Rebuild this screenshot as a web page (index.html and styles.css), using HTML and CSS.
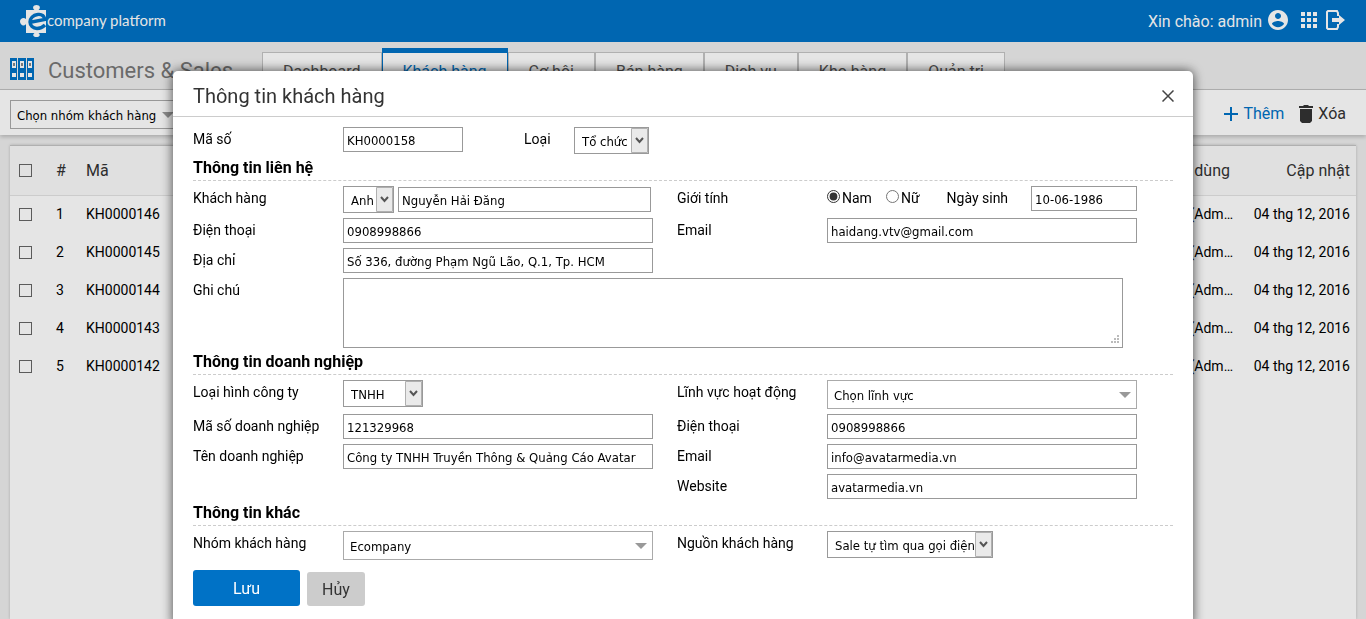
FILE: index.html
```html
<!DOCTYPE html>
<html lang="vi">
<head>
    <meta charset="UTF-8">
    <meta name="viewport" content="width=device-width, initial-scale=1.0">
    <title>Customers &amp; Sales</title>
    <link rel="stylesheet" href="styles.css">
</head>
<body>
    <header class="topbar">
        <a class="logo" href="#">
            <svg class="logo-mark" width="27" height="32" viewBox="0 0 27 32">
                <path fill="#fff" d="M6 5h8.500c-2.500-2-1.500-5 2-5s4.500 3 2 5H26v23h-7.500c2.500 2 1 4-2 4s-4.500-2-2-4H6v-9c-2 3-6 1-6-2.500S4 12 6 14z"/>
                <path fill="none" stroke="#0072c6" stroke-width="3.400" d="M9 17.500l16-3c-1-4-4-5.500-7.500-5-4.500.5-7.500 4-7.500 7.500s3 6.500 7 6.500c3 0 5.500-1 8-3.500"/>
            </svg>
            <span class="logo-text">company platform</span>
        </a>
        <div class="user-menu">
            <span class="greeting">Xin chào: admin</span>
            <button class="icon-button" aria-label="Tài khoản">
                <svg width="20" height="20" viewBox="2 2 20 20"><path fill="#fff" d="M12 2C6.480 2 2 6.480 2 12s4.480 10 10 10 10-4.480 10-10S17.520 2 12 2zm0 3c1.660 0 3 1.340 3 3s-1.340 3-3 3-3-1.340-3-3 1.340-3 3-3zm0 14.200c-2.500 0-4.710-1.280-6-3.220.03-1.990 4-3.080 6-3.080 1.990 0 5.970 1.090 6 3.080-1.290 1.940-3.500 3.220-6 3.220z"/></svg>
            </button>
            <button class="icon-button apps" aria-label="Ứng dụng">
                <svg width="16" height="16" viewBox="4 4 16 16"><path fill="#fff" d="M4 8h4V4H4zm6 12h4v-4h-4zm-6 0h4v-4H4zm0-6h4v-4H4zm6 0h4v-4h-4zm6-10v4h4V4zm-6 4h4V4h-4zm6 6h4v-4h-4zm0 6h4v-4h-4z"/></svg>
            </button>
            <button class="icon-button" aria-label="Thoát">
                <svg width="20" height="20" viewBox="0 0 20 20"><path fill="none" stroke="#fff" stroke-width="2" d="M12 6V3l-1-2H2L1 2v16l1 1h9l1-2v-3"/><path fill="#fff" d="M6 8h7V5l6 5-6 5v-3H6z"/></svg>
            </button>
        </div>
    </header>

    <div class="titlebar">
        <svg class="module-icon" width="24" height="22" viewBox="0 0 24 22">
            <path fill="#0072c6" d="M0 0h7v22H0zM8 0h8v22H8zM17 0h7v22h-7z"/>
            <path fill="#fff" d="M2 3h4v7H2zM10 3h4v7h-4zM18 3h4v7h-4zM2 15h4v4H2zM10 15h4v4h-4zM18 15h4v4h-4z"/>
            <path fill="#888" d="M3 5h2v3H3zM11 5h2v3h-2zM19 5h2v3h-2z"/>
        </svg>
        <h1 class="module-title">Customers &amp; Sales</h1>
        <nav class="tabs">
            <a class="tab" href="#">Dashboard</a>
            <a class="tab active" href="#">Khách hàng</a>
            <a class="tab" href="#">Cơ hội</a>
            <a class="tab" href="#">Bán hàng</a>
            <a class="tab" href="#">Dịch vụ</a>
            <a class="tab" href="#">Kho hàng</a>
            <a class="tab" href="#">Quản trị</a>
        </nav>
    </div>

    <div class="toolbar">
        <select class="combo group-filter" aria-label="Nhóm khách hàng">
            <option>Chọn nhóm khách hàng</option>
        </select>
        <div class="actions">
            <button class="action add">
                <svg width="14" height="14" viewBox="0 0 14 14"><path fill="#0072c6" d="M6 0h2v6h6v2H8v6H6V8H0V6h6z"/></svg>
                Thêm
            </button>
            <button class="action">
                <svg width="14" height="18" viewBox="0 0 14 18"><path fill="#333" d="M1 4h12v12l-2 2H3l-2-2zM0 1h4l1-1h4l1 1h4v2H0z"/></svg>
                Xóa
            </button>
        </div>
    </div>

    <div class="list">
        <table class="customers">
            <thead>
                <tr>
                    <th class="col-check"><input type="checkbox" aria-label="Chọn tất cả"></th>
                    <th class="col-index">#</th>
                    <th>Mã</th>
                    <th class="col-user">Người dùng</th>
                    <th class="col-date">Cập nhật</th>
                </tr>
            </thead>
            <tbody>
                <tr>
                    <td><input type="checkbox" aria-label="KH0000146"></td>
                    <td>1</td>
                    <td>KH0000146</td>
                    <td class="col-user">(Adm…</td>
                    <td class="col-date">04 thg 12, 2016</td>
                </tr>
                <tr>
                    <td><input type="checkbox" aria-label="KH0000145"></td>
                    <td>2</td>
                    <td>KH0000145</td>
                    <td class="col-user">(Adm…</td>
                    <td class="col-date">04 thg 12, 2016</td>
                </tr>
                <tr>
                    <td><input type="checkbox" aria-label="KH0000144"></td>
                    <td>3</td>
                    <td>KH0000144</td>
                    <td class="col-user">(Adm…</td>
                    <td class="col-date">04 thg 12, 2016</td>
                </tr>
                <tr>
                    <td><input type="checkbox" aria-label="KH0000143"></td>
                    <td>4</td>
                    <td>KH0000143</td>
                    <td class="col-user">(Adm…</td>
                    <td class="col-date">04 thg 12, 2016</td>
                </tr>
                <tr>
                    <td><input type="checkbox" aria-label="KH0000142"></td>
                    <td>5</td>
                    <td>KH0000142</td>
                    <td class="col-user">(Adm…</td>
                    <td class="col-date">04 thg 12, 2016</td>
                </tr>
            </tbody>
        </table>
    </div>

    <!-- Customer dialog -->
    <div class="overlay">
        <div class="modal" role="dialog" aria-labelledby="modal-title">
            <div class="modal-header">
                <h2 class="modal-title" id="modal-title">Thông tin khách hàng</h2>
                <button class="close-button" aria-label="Đóng">
                    <svg width="12" height="12" viewBox="0 0 12 12"><path fill="none" stroke="#444" stroke-width="1.500" d="M.5.5l11 11M11.500.5l-11 11"/></svg>
                </button>
            </div>

            <form class="modal-body">
                <div class="fields">
                    <div class="field">
                        <label class="label" for="code">Mã số</label>
                        <div class="control">
                            <input class="input code" id="code" type="text" value="KH0000158">
                            <label class="label-inline" for="kind">Loại</label>
                            <select class="select kind" id="kind"><option>Tổ chức</option></select>
                        </div>
                    </div>
                </div>

                <h3 class="section-title">Thông tin liên hệ</h3>
                <div class="fields">
                    <div class="field">
                        <label class="label" for="name">Khách hàng</label>
                        <div class="control name-line">
                            <select class="select salutation" aria-label="Danh xưng"><option>Anh</option></select>
                            <input class="input" id="name" type="text" value="Nguyễn Hải Đăng">
                        </div>
                    </div>
                    <div class="field">
                        <span class="label">Giới tính</span>
                        <div class="control gender-line">
                            <label class="radio"><input type="radio" name="gender" checked>Nam</label>
                            <label class="radio"><input type="radio" name="gender">Nữ</label>
                            <label class="label-birthday" for="birthday">Ngày sinh</label>
                            <input class="input" id="birthday" type="text" value="10-06-1986">
                        </div>
                    </div>
                    <div class="field">
                        <label class="label" for="phone">Điện thoại</label>
                        <input class="input" id="phone" type="text" value="0908998866">
                    </div>
                    <div class="field">
                        <label class="label" for="email">Email</label>
                        <input class="input" id="email" type="text" value="haidang.vtv@gmail.com">
                    </div>
                    <div class="field field-left">
                        <label class="label" for="address">Địa chỉ</label>
                        <input class="input" id="address" type="text" value="Số 336, đường Phạm Ngũ Lão, Q.1, Tp. HCM">
                    </div>
                    <div class="field field-wide">
                        <label class="label" for="note">Ghi chú</label>
                        <textarea class="textarea" id="note"></textarea>
                    </div>
                </div>

                <h3 class="section-title">Thông tin doanh nghiệp</h3>
                <div class="fields">
                    <div class="field">
                        <label class="label" for="company-type">Loại hình công ty</label>
                        <select class="select company-type" id="company-type"><option>TNHH</option></select>
                    </div>
                    <div class="field">
                        <label class="label" for="industry">Lĩnh vực hoạt động</label>
                        <select class="combo" id="industry"><option>Chọn lĩnh vực</option></select>
                    </div>
                    <div class="field">
                        <label class="label" for="tax-code">Mã số doanh nghiệp</label>
                        <input class="input" id="tax-code" type="text" value="121329968">
                    </div>
                    <div class="field">
                        <label class="label" for="company-phone">Điện thoại</label>
                        <input class="input" id="company-phone" type="text" value="0908998866">
                    </div>
                    <div class="field">
                        <label class="label" for="company-name">Tên doanh nghiệp</label>
                        <input class="input" id="company-name" type="text" value="Công ty TNHH Truyền Thông &amp; Quảng Cáo Avatar">
                    </div>
                    <div class="field">
                        <label class="label" for="company-email">Email</label>
                        <input class="input" id="company-email" type="text" value="info@avatarmedia.vn">
                    </div>
                    <div class="field field-right">
                        <label class="label" for="website">Website</label>
                        <input class="input" id="website" type="text" value="avatarmedia.vn">
                    </div>
                </div>

                <h3 class="section-title">Thông tin khác</h3>
                <div class="fields">
                    <div class="field">
                        <label class="label" for="group">Nhóm khách hàng</label>
                        <select class="combo" id="group"><option>Ecompany</option></select>
                    </div>
                    <div class="field">
                        <label class="label" for="source">Nguồn khách hàng</label>
                        <select class="select source" id="source"><option>Sale tự tìm qua gọi điện</option></select>
                    </div>
                </div>

                <div class="buttons">
                    <button class="button save" type="button">Lưu</button>
                    <button class="button cancel" type="button">Hủy</button>
                </div>
            </form>
        </div>
    </div>
</body>
</html>
```

FILE: styles.css
```css
* {
    box-sizing: border-box;
}

body {
    margin: 0;
    height: 100vh;
    display: flex;
    flex-direction: column;
    overflow: hidden;
    font-family: Roboto, sans-serif;
    font-size: 14px;
    color: #000;
    background: #eee;
}

button {
    font-family: inherit;
    border: none;
    background: none;
    padding: 0;
    cursor: pointer;
}

/* Top bar */
.topbar {
    display: flex;
    justify-content: space-between;
    align-items: center;
    height: 42px;
    padding: 0 20px;
    background: #0072c6;
    color: #fff;
}

.logo {
    display: flex;
    align-items: center;
    color: #fff;
    text-decoration: none;
}

.logo-text {
    font-family: Lato, sans-serif;
    font-size: 15px;
    line-height: 20px;
    padding-bottom: 3px;
}

.user-menu {
    display: flex;
    align-items: center;
    gap: 6px;
    padding-bottom: 2px;
}

.greeting {
    padding-top: 2px;
    font-size: 16px;
}

.icon-button {
    display: flex;
}

.apps {
    margin: 0 3px 0 7px;
}

/* Module title and tabs */
.titlebar {
    display: flex;
    height: 48px;
    padding: 0 10px;
    border-bottom: 1px solid #c4c4c4;
}

.module-icon {
    margin-top: 16px;
}

.module-title {
    margin: 0 29px 0 14px;
    font-size: 22px;
    font-weight: normal;
    line-height: 58px;
    color: #777;
    white-space: nowrap;
}

.tabs {
    display: flex;
    align-items: flex-end;
}

.tab {
    height: 37px;
    padding: 0 20px;
    border: 1px solid #c4c4c4;
    border-bottom: none;
    background: #fff;
    color: #555;
    font-size: 16px;
    line-height: 38px;
    text-decoration: none;
    white-space: nowrap;
}

.tab.active {
    height: 41px;
    border-color: #0072c6;
    border-top-width: 5px;
    color: #0072c6;
}

/* Toolbar */
.toolbar {
    display: flex;
    justify-content: space-between;
    align-items: center;
    padding: 10px 20px 6px 10px;
    background: #fff;
    box-shadow: 0 2px 4px rgba(0,0,0,0.2);
}

.combo.group-filter {
    width: 170px;
    flex: none;
}

.actions {
    display: flex;
    gap: 15px;
    padding-bottom: 2px;
}

.action {
    display: flex;
    align-items: center;
    gap: 5px;
    font-size: 16px;
    color: #333;
}

.action.add {
    color: #0072c6;
}

/* Customer list */
.list {
    flex: 1;
    margin: 10px 10px 0;
    border-top: 1px solid #c4c4c4;
    background: #fff;
    box-shadow: 0 0 3px rgba(0,0,0,0.2);
}

.customers {
    width: 100%;
    border-collapse: collapse;
    table-layout: fixed;
}

.customers th {
    height: 49px;
    padding: 0;
    border-bottom: 1px solid #e4e4e4;
    background: #fafafa;
    font-size: 16px;
    font-weight: normal;
    text-align: left;
    color: #333;
}

.customers td {
    height: 38px;
    padding: 0;
}

.customers .col-check {
    width: 46px;
}

.customers .col-index {
    width: 30px;
}

.customers .col-user {
    width: 90px;
    text-align: right;
}

.customers th.col-user {
    padding-right: 3px;
}

.customers .col-date {
    width: 123px;
    padding-right: 6px;
    text-align: right;
}

.customers input {
    display: block;
    appearance: none;
    width: 13px;
    height: 13px;
    margin: 0 0 0 9px;
    border: 1px solid #666;
}

/* Dialog */
.overlay {
    position: fixed;
    inset: 0;
    padding-top: 71px;
    background: rgba(0,0,0,0.1);
    overflow: hidden;
}

.modal {
    max-width: 1020px;
    min-height: 100%;
    margin: 0 auto;
    border-radius: 5px 5px 0 0;
    background: #fff;
    box-shadow: 0 0 12px rgba(0,0,0,0.7);
}

.modal-header {
    display: flex;
    justify-content: space-between;
    align-items: center;
    height: 46px;
    padding: 4px 19px 0 20px;
    border-bottom: 1px solid #ccc;
}

.modal-title {
    margin: 0;
    font-size: 20px;
    font-weight: normal;
    color: #333;
}

.close-button {
    display: flex;
}

.modal-body {
    padding: 5px 20px 20px;
}

.section-title {
    height: 27px;
    margin: 0;
    border-bottom: 1px dashed #ccc;
    font-size: 16px;
    font-weight: bold;
    line-height: 28px;
}

.fields {
    display: grid;
    grid-template-columns: repeat(2, minmax(0, 1fr));
    gap: 5px 24px;
    padding: 5px 36px 0 0;
}

.field {
    display: flex;
    align-items: flex-start;
}

.field-left {
    grid-column: 1;
}

.field-right {
    grid-column: 2;
}

.field-wide {
    grid-column: 1 / 3;
    padding-right: 14px;
}

.label {
    flex: none;
    width: 150px;
    line-height: 25px;
}

.control {
    flex: 1;
    display: flex;
    min-width: 0;
}

.input,
.select,
.combo,
.textarea {
    flex: 1;
    min-width: 0;
    margin: 0;
    border: 1px solid #999;
    border-radius: 0;
    background: #fff;
    color: #000;
    font-family: "DejaVu Sans Condensed", "Noto Sans", sans-serif;
    font-size: 13px;
}

.input {
    height: 25px;
    padding: 2px 3px 0;
}

.input.code {
    flex: none;
    width: 120px;
}

.textarea {
    display: block;
    height: 70px;
}

.textarea::-webkit-resizer {
    background: url("data:image/svg+xml,%3Csvg xmlns='http://www.w3.org/2000/svg' width='8' height='9'%3E%3Cpath fill='%23bbb' d='M0 6h2v2H0zM3 6h2v2H3zM3 3h2v2H3zM6 6h2v2H6zM6 3h2v2H6zM6 0h2v2H6z'/%3E%3C/svg%3E") no-repeat center;
}

.select {
    appearance: none;
    flex: none;
    height: 27px;
    padding: 2px 0 0 7px;
    background: #fff url("data:image/svg+xml,%3Csvg xmlns='http://www.w3.org/2000/svg' width='17' height='25'%3E%3Cpath fill='%23eaeaea' stroke='%23b0b0b0' d='M.5.5h16v24H.5z'/%3E%3Cpath fill='none' stroke='%23555' stroke-width='2' d='M5 10l3.500 4L12 10'/%3E%3C/svg%3E") no-repeat right center;
}

.combo {
    appearance: none;
    height: 29px;
    padding: 2px 18px 0 6px;
    border-color: #aaa;
    background: #fff url("data:image/svg+xml,%3Csvg xmlns='http://www.w3.org/2000/svg' width='12' height='6'%3E%3Cpath fill='%23999' d='M0 0h12L6 6z'/%3E%3C/svg%3E") no-repeat right 5px center;
}

.kind {
    width: 75px;
}

.salutation {
    width: 51px;
}

.company-type {
    width: 80px;
}

.source {
    width: 166px;
}

.label-inline {
    width: 50px;
    margin-left: 61px;
    line-height: 25px;
}

.name-line {
    align-items: center;
    gap: 4px;
    padding-right: 2px;
}

.gender-line {
    line-height: 25px;
}

.radio {
    display: flex;
    margin-right: 14px;
}

.radio input {
    width: 13px;
    height: 13px;
    margin: 4px 2px 0 0;
    accent-color: #333;
}

.label-birthday {
    margin: 0 23px 0 13px;
}

.buttons {
    display: flex;
    align-items: flex-end;
    gap: 7px;
    padding-top: 10px;
}

.button {
    border-radius: 3px;
    font-size: 16px;
}

.save {
    height: 36px;
    padding: 0 40px;
    background: #0072c6;
    color: #fff;
}

.cancel {
    height: 34px;
    padding: 0 15px;
    background: #ccc;
    color: #333;
}
```
